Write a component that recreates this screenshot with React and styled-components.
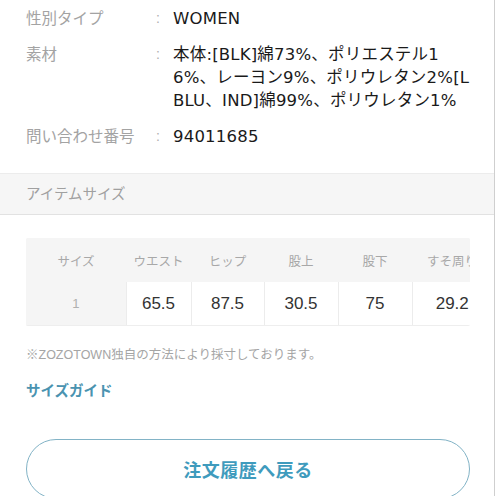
import React from "react";
import styled, { createGlobalStyle } from "styled-components";

const GlobalStyle = createGlobalStyle`
  html, body {
    margin: 0;
    padding: 0;
    background: #fff;
  }
  body {
    font-family: "Liberation Sans", "Noto Sans CJK JP", sans-serif;
    color: #222;
    overflow: hidden;
  }
`;

// lines are kept as the shop page wraps them
const specs = [
  { label: "性別タイプ", lines: ["WOMEN"] },
  {
    label: "素材",
    lines: [
      "本体:[BLK]綿73%、ポリエステル1",
      "6%、レーヨン9%、ポリウレタン2%[L",
      "BLU、IND]綿99%、ポリウレタン1%",
    ],
  },
  { label: "問い合わせ番号", lines: ["94011685"] },
];

const columns = [
  { name: "サイズ", width: 100, value: "1" },
  { name: "ウエスト", width: 65, value: "65.5" },
  { name: "ヒップ", width: 73, value: "87.5" },
  { name: "股上", width: 74, value: "30.5" },
  { name: "股下", width: 74, value: "75" },
  { name: "すそ周り", width: 80, value: "29.2" },
];

const App = () => {
  return (
    <Page>
      <GlobalStyle />
      <SpecList>
        {specs.map((s) => (
          <SpecRow key={s.label}>
            <SpecLabel>{s.label}</SpecLabel>
            <Colon>:</Colon>
            <SpecValue>
              {s.lines.map((l) => (
                <ValueLine key={l}>{l}</ValueLine>
              ))}
            </SpecValue>
          </SpecRow>
        ))}
      </SpecList>
      <SectionBar>アイテムサイズ</SectionBar>
      <SizeBody>
        <TableWrap>
          <SizeTable>
            <thead>
              <tr>
                {columns.map((c) => (
                  <HeadCell key={c.name} $w={c.width}>
                    {c.name}
                  </HeadCell>
                ))}
              </tr>
            </thead>
            <tbody>
              <tr>
                {columns.map((c, i) => (
                  <BodyCell key={c.name} $first={i === 0}>
                    {c.value}
                  </BodyCell>
                ))}
              </tr>
            </tbody>
          </SizeTable>
        </TableWrap>
        <Note>※ZOZOTOWN独自の方法により採寸しております。</Note>
        <GuideLink href="#">サイズガイド</GuideLink>
        <BackButton>注文履歴へ戻る</BackButton>
      </SizeBody>
    </Page>
  );
};

const Page = styled.div`
  width: 494px;
  min-height: 496px;
  border-right: 1px solid #cfcfcf;
`;

const SpecList = styled.div`
  display: flex;
  flex-direction: column;
  gap: 13px;
  padding: 7px 0 25px 26px;
`;

const SpecRow = styled.div`
  display: grid;
  grid-template-columns: 130px 17px 1fr;
  align-items: start;
  line-height: 23px;
`;

const SpecLabel = styled.div`
  font-size: 15.5px;
  color: #a3a3a3;
  white-space: nowrap;
`;

const Colon = styled.div`
  font-size: 14px;
  color: #b0b0b0;
`;

const SpecValue = styled.div`
  font-family: "DejaVu Sans", "Noto Sans CJK JP", sans-serif;
  font-size: 16.5px;
  color: #1a1a1a;
  letter-spacing: 0.2px;
`;

const ValueLine = styled.div`
  white-space: nowrap;
`;

const SectionBar = styled.div`
  height: 40px;
  line-height: 40px;
  padding-left: 26px;
  background: #f6f6f6;
  border-top: 1px solid #ececec;
  border-bottom: 1px solid #e2e2e2;
  font-size: 14.5px;
  color: #a0a0a0;
`;

const SizeBody = styled.div`
  padding: 23px 24px 0 26px;
  display: flex;
  flex-direction: column;
  align-items: flex-start;
`;

const TableWrap = styled.div`
  width: 444px;
  overflow: hidden;
  background: #f5f5f5;
  border-radius: 2px;
`;

const SizeTable = styled.table`
  border-collapse: collapse;
  table-layout: fixed;
`;

const HeadCell = styled.th`
  width: ${(p) => p.$w}px;
  min-width: ${(p) => p.$w}px;
  height: 44px;
  padding: 0;
  background: #f5f5f5;
  font-size: 12.5px;
  font-weight: normal;
  color: #a8a8a8;
  text-align: center;
  white-space: nowrap;
`;

const BodyCell = styled.td`
  height: 43px;
  padding: 0;
  text-align: center;
  background: ${(p) => (p.$first ? "#f5f5f5" : "#fff")};
  border-left: ${(p) => (p.$first ? "none" : "1px solid #ececec")};
  border-bottom: 1px solid #eeeeee;
  font-size: ${(p) => (p.$first ? "13px" : "17px")};
  color: ${(p) => (p.$first ? "#b0b0b0" : "#333")};
`;

const Note = styled.p`
  margin: 20px 0 0;
  font-size: 12.5px;
  line-height: 18px;
  color: #a5a5a5;
`;

const GuideLink = styled.a`
  margin-top: 17px;
  font-size: 14.5px;
  line-height: 20px;
  font-weight: bold;
  color: #4a93b0;
  text-decoration: none;
`;

const BackButton = styled.button`
  margin-top: 38px;
  width: 444px;
  height: 60px;
  border: 1.5px solid #82b3c6;
  border-radius: 30px;
  background: #fff;
  font-family: inherit;
  font-size: 18px;
  font-weight: bold;
  color: #3f9bbd;
  letter-spacing: 0.5px;
`;

export default App;
